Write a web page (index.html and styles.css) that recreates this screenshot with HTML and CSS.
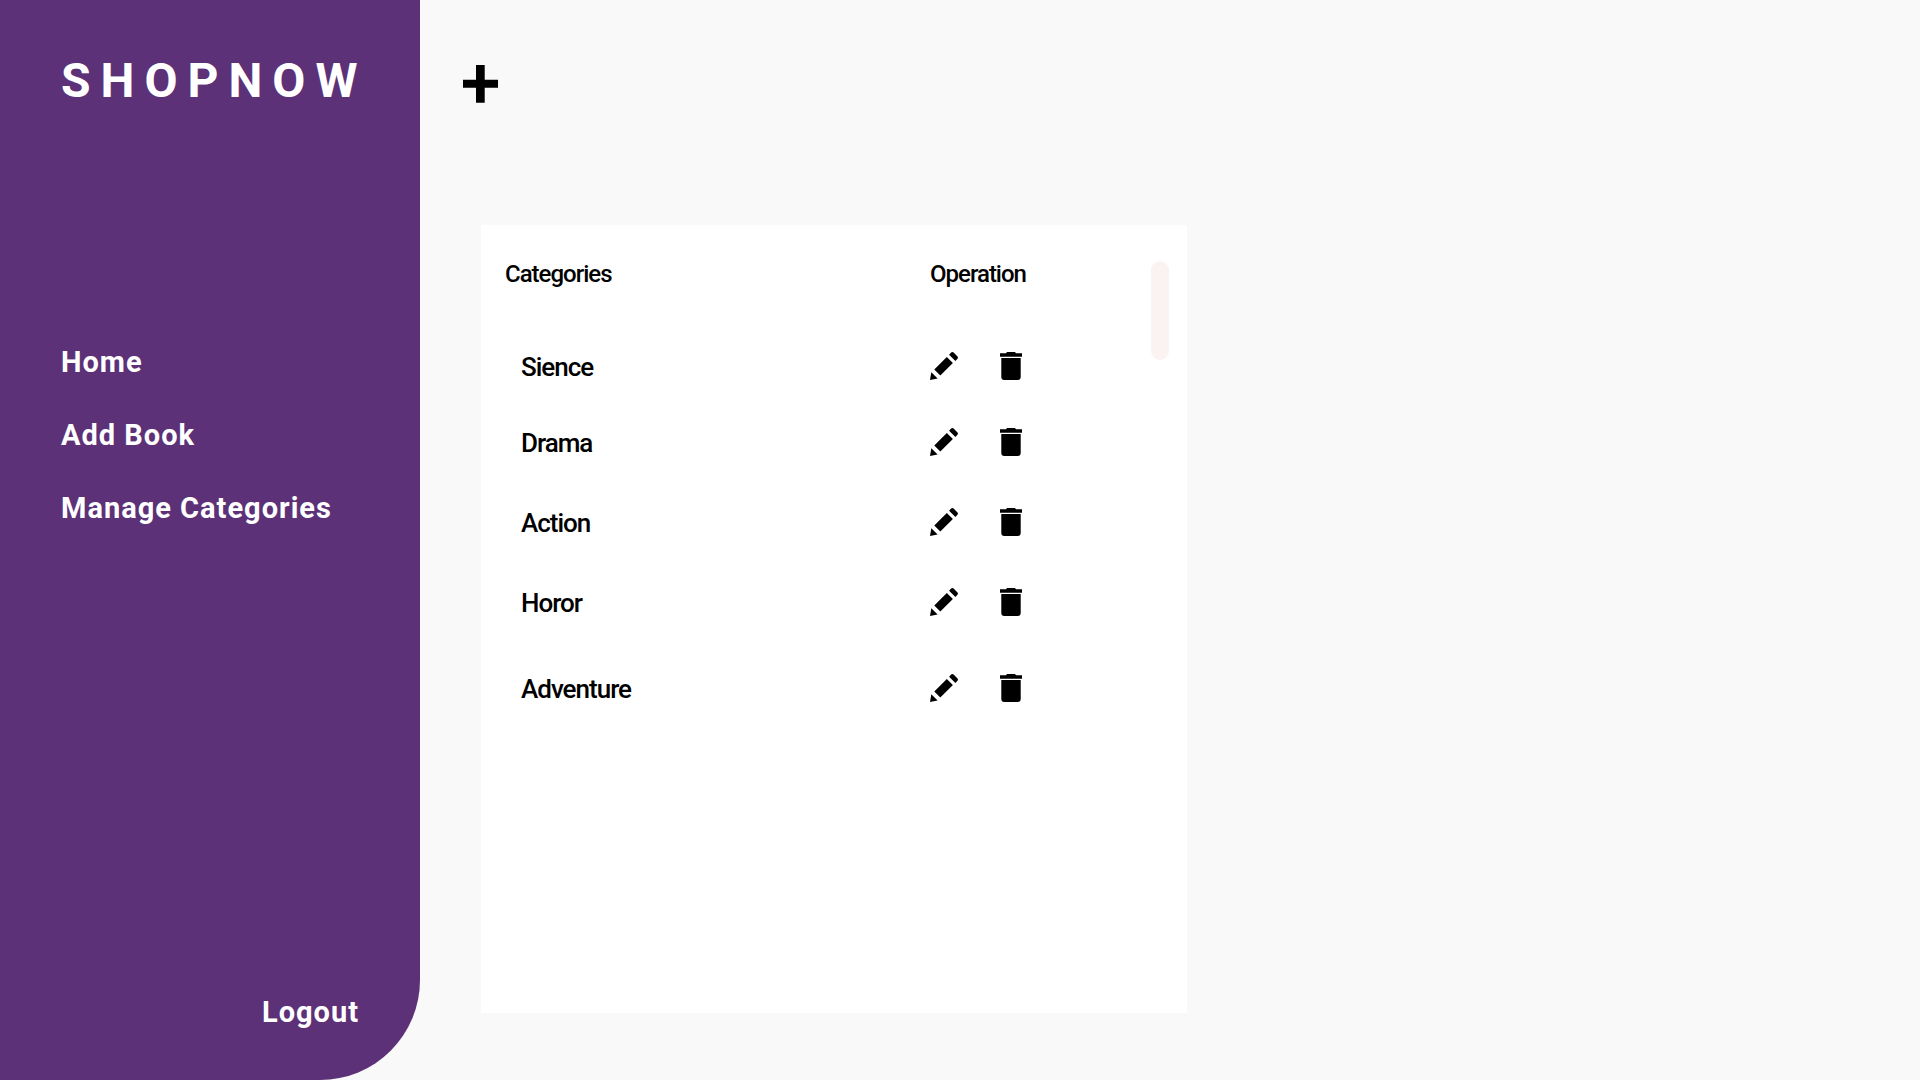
FILE: index.html
```html
<!DOCTYPE html>
<html lang="en">
<head>
<meta charset="utf-8">
<title>ShopNow – Manage Categories</title>
<link rel="stylesheet" href="styles.css">
</head>
<body>
<svg class="sprite" aria-hidden="true">
  <symbol id="pencil" viewBox="0 0 28 28">
    <path d="M0 28 1.3 20.3 7.6 26.6ZM4.3 17.4 16.8 4.9 22.9 11 10.3 23.5ZM19.1 2.7 21.1.6Q22.3-.5 23.6.6L27.5 4.500Q28.400 5.600 27.500 6.700L25.400 8.900Z"/>
  </symbol>
  <symbol id="trash" viewBox="0 0 22 28">
    <path d="M0 1.300H6L7 0H15L16 1.300H22V4.700H0ZM1.300 6H20.700V25Q20.700 28 17.700 28H4.300Q1.300 28 1.300 25Z"/>
  </symbol>
</svg>
<aside class="sidebar">
  <h1 class="brand">SHOPNOW</h1>
  <nav class="menu">
    <a class="link" href="#home">Home</a>
    <a class="link" href="#add-book">Add Book</a>
    <a class="link" href="#categories">Manage Categories</a>
  </nav>
  <a class="link logout" href="#logout">Logout</a>
</aside>
<main class="content">
  <button class="add" type="button" aria-label="Add category">
    <svg width="37" height="38" viewBox="0 0 37 38"><path d="M14 0H22.700V14.700H36V22.700H22.700V37.700H14V22.700H1V14.700H14Z"/></svg>
  </button>
  <section class="card">
    <table class="categories">
      <thead>
        <tr><th scope="col">Categories</th><th scope="col">Operation</th></tr>
      </thead>
      <tbody>
        <tr class="first"><td>Sience</td><td><div class="actions"><button type="button" aria-label="Edit Sience"><svg width="28" height="28"><use href="#pencil"/></svg></button><button type="button" aria-label="Delete Sience"><svg width="22" height="28"><use href="#trash"/></svg></button></div></td></tr>
        <tr class="compact"><td>Drama</td><td><div class="actions"><button type="button" aria-label="Edit Drama"><svg width="28" height="28"><use href="#pencil"/></svg></button><button type="button" aria-label="Delete Drama"><svg width="22" height="28"><use href="#trash"/></svg></button></div></td></tr>
        <tr><td>Action</td><td><div class="actions"><button type="button" aria-label="Edit Action"><svg width="28" height="28"><use href="#pencil"/></svg></button><button type="button" aria-label="Delete Action"><svg width="22" height="28"><use href="#trash"/></svg></button></div></td></tr>
        <tr><td>Horor</td><td><div class="actions"><button type="button" aria-label="Edit Horor"><svg width="28" height="28"><use href="#pencil"/></svg></button><button type="button" aria-label="Delete Horor"><svg width="22" height="28"><use href="#trash"/></svg></button></div></td></tr>
        <tr class="roomy"><td>Adventure</td><td><div class="actions"><button type="button" aria-label="Edit Adventure"><svg width="28" height="28"><use href="#pencil"/></svg></button><button type="button" aria-label="Delete Adventure"><svg width="22" height="28"><use href="#trash"/></svg></button></div></td></tr>
      </tbody>
    </table>
    <div class="thumb"></div>
  </section>
</main>
</body>
</html>
```
FILE: styles.css
```css
* {
  box-sizing: border-box;
}

body {
  margin: 0;
  min-height: 100vh;
  display: grid;
  grid-template-columns: 420px 1fr;
  background: #f9f9f9;
  color: #000;
  font-family: Roboto, "Liberation Sans", sans-serif;
}

.sprite {
  display: none;
}

button {
  display: flex;
  padding: 0;
  border: 0;
  background: none;
  cursor: pointer;
}

/* Sidebar */
.sidebar {
  display: flex;
  flex-direction: column;
  padding: 53px 61px 50px;
  background: #5c3178;
  color: #fff;
  border-bottom-right-radius: 100px;
}

.brand {
  margin: 0;
  font-size: 48px;
  line-height: 56px;
  font-weight: 700;
  letter-spacing: 10px;
  white-space: nowrap;
}

.menu {
  display: flex;
  flex-direction: column;
  align-items: flex-start;
  gap: 37px;
  margin-top: 235px;
}

.link {
  color: inherit;
  font-size: 29px;
  line-height: 36px;
  font-weight: 700;
  letter-spacing: 1px;
  text-decoration: none;
}

.logout {
  align-self: flex-end;
  margin-top: auto;
}

/* Content */
.content {
  display: flex;
  flex-direction: column;
  align-items: flex-start;
  gap: 122px;
  padding: 65px 46px 67px 42px;
}

.card {
  flex: 1;
  width: 50%;
  display: flex;
  justify-content: space-between;
  align-items: flex-start;
  margin-left: 19px;
  padding: 36px 18px 36px 24px;
  background: #fff;
}

.categories {
  border-collapse: collapse;
  font-weight: 500;
  letter-spacing: -1px;
}

.categories th {
  padding: 0;
  text-align: left;
  font-size: 24px;
  line-height: 26px;
  font-weight: 500;
}

.categories td {
  height: 80px;
  padding: 0 0 0 16px;
  vertical-align: bottom;
  font-size: 26px;
  line-height: 26px;
}

.categories th:first-child {
  width: 425px;
}

.categories td:last-child {
  padding: 0;
}

.categories .first td {
  height: 93px;
}

.categories .compact td {
  height: 76px;
}

.categories .roomy td {
  height: 86px;
}

.actions {
  display: flex;
  gap: 42px;
}

.thumb {
  width: 18px;
  height: 99px;
  border-radius: 9px;
  background: #fbf3f2;
}
```
